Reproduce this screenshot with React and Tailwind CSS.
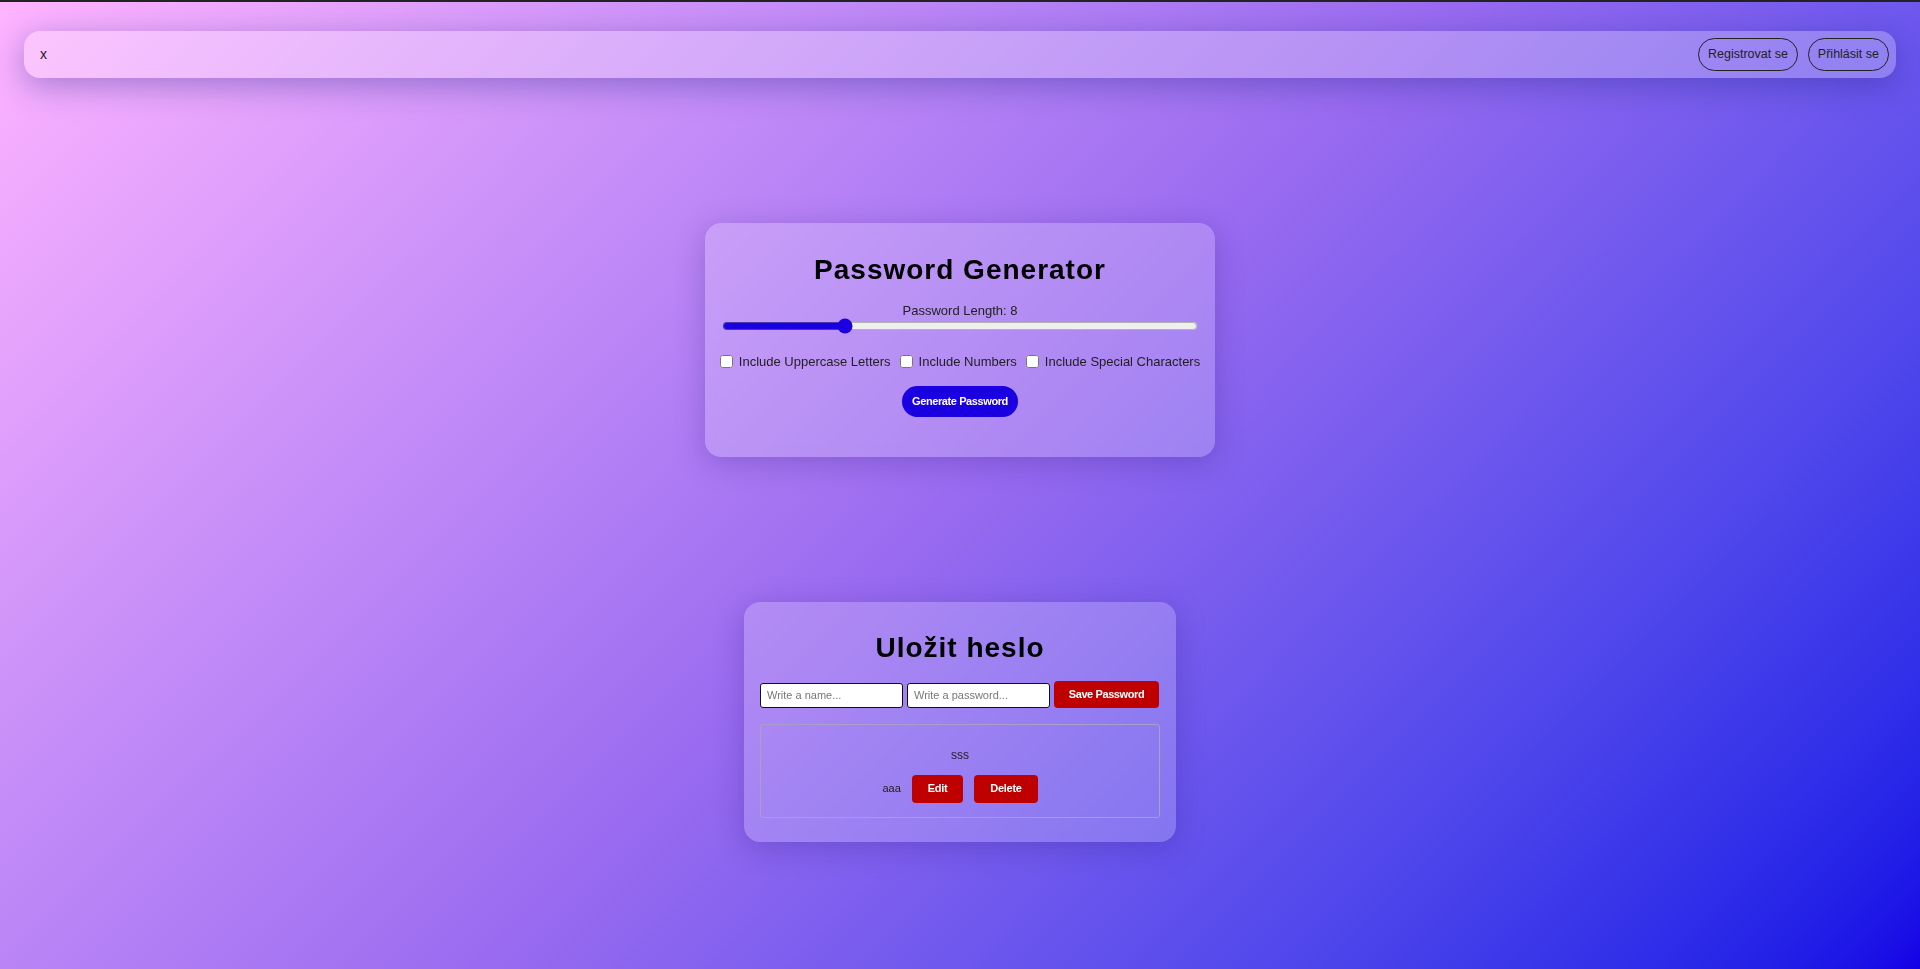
import React, { useState } from 'react';

const glass = 'bg-white/20 shadow-[0_6px_30px_rgba(40,20,120,0.25)] backdrop-blur-[5px]';

function Navbar() {
  return (
    <nav className="mx-[24px] mt-[29px] h-[47px] rounded-[16px] bg-white/25 shadow-[0_8px_32px_rgba(31,38,135,0.37)] flex items-center justify-between pl-[16px] pr-[7px]">
      <span className="text-[14px] text-[#222]">x</span>
      <div className="flex items-center gap-[10px]">
        <button className="h-[33px] px-[9px] rounded-full border border-[#222] text-[12.5px] text-[#222]">Registrovat se</button>
        <button className="h-[33px] px-[9px] rounded-full border border-[#222] text-[12.5px] text-[#222]">Přihlásit se</button>
      </div>
    </nav>
  );
}

function Generator() {
  const [length, setLength] = useState(8);
  const options = ['Include Uppercase Letters', 'Include Numbers', 'Include Special Characters'];
  return (
    <div className={`w-[510px] mx-auto mt-[145px] rounded-[16px] ${glass} px-[17px] pt-[31px] pb-[40px] flex flex-col items-center`}>
      <h1 className="text-[28px] leading-[32px] font-bold tracking-[1px] text-black">Password Generator</h1>
      <label className="mt-[17px] text-[13px] leading-[15px] text-[#222]">Password Length: {length}</label>
      <input
        type="range"
        min="4"
        max="20"
        value={length}
        onChange={(e) => setLength(e.target.value)}
        className="w-full h-[16px] m-0 accent-[#1a00e0]"
      />
      <div className="mt-[18px] w-max flex items-center whitespace-nowrap text-[13px] text-[#222]">
        {options.map((o, i) => (
          <label key={o} className={`flex items-center ${i > 0 ? 'ml-[9px]' : ''}`}>
            <input type="checkbox" className="w-[13px] h-[13px] my-[3px] ml-0 mr-[6px]" />
            {o}
          </label>
        ))}
      </div>
      <button className="mt-[14px] h-[31px] px-[10px] rounded-full bg-[#1a00e0] text-white text-[11px] font-bold tracking-[-0.4px]">
        Generate Password
      </button>
    </div>
  );
}

function SavePassword() {
  return (
    <div className={`w-[432px] mx-auto mt-[145px] rounded-[16px] ${glass} px-[16px] pt-[30px] pb-[24px]`}>
      <h2 className="text-center text-[28px] leading-[32px] font-bold tracking-[1px] text-black">Uložit heslo</h2>
      <div className="mt-[17px] flex items-end gap-[4px]">
        <input placeholder="Write a name..." className="w-[143px] h-[25px] px-[6px] bg-white border-[1.5px] border-[#111] rounded-[3px] text-[11px] placeholder:text-[#777]" />
        <input placeholder="Write a password..." className="w-[143px] h-[25px] px-[6px] bg-white border-[1.5px] border-[#111] rounded-[3px] text-[11px] placeholder:text-[#777]" />
        <button className="w-[105px] h-[27px] rounded-[4px] bg-[#bf0000] text-white text-[11px] font-bold tracking-[-0.4px]">Save Password</button>
      </div>
      <div className="mt-[16px] h-[94px] border border-[#a9a0c8] rounded-[3px] pt-[22px] flex flex-col items-center">
        <div className="text-[12px] leading-[16px] text-[#222]">sss</div>
        <div className="mt-[12px] flex items-center gap-[11px]">
          <span className="text-[11px] text-[#222]">aaa</span>
          <button className="h-[28px] px-[16px] rounded-[4px] bg-[#bf0000] text-white text-[11px] font-bold tracking-[-0.3px]">Edit</button>
          <button className="h-[28px] px-[16px] rounded-[4px] bg-[#bf0000] text-white text-[11px] font-bold tracking-[-0.3px]">Delete</button>
        </div>
      </div>
    </div>
  );
}

export default function App() {
  return (
    <div className="h-[969px] w-full overflow-hidden bg-linear-135 from-[#ffb4ff] via-[#9a6bf0] to-[#1500e6] font-['Liberation_Sans',Arial,sans-serif]">
      <div className="h-[2px] bg-[#222]" />
      <Navbar />
      <Generator />
      <SavePassword />
    </div>
  );
}
